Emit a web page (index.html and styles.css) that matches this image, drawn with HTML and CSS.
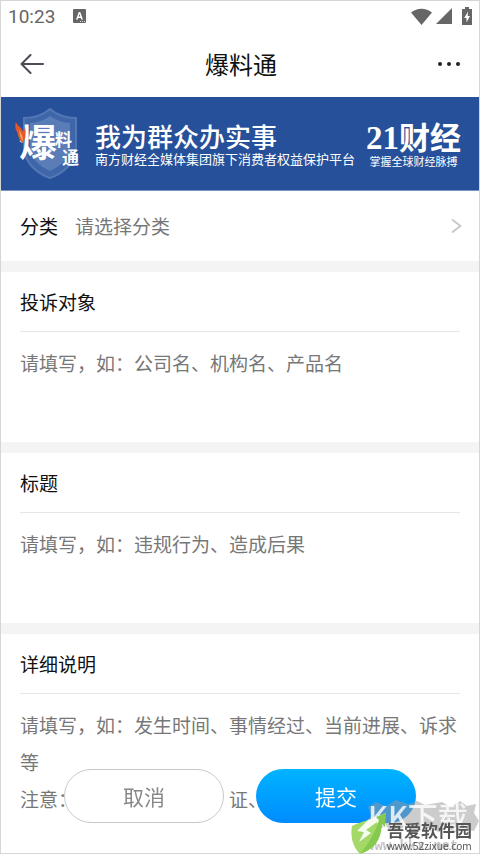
FILE: index.html
```html
<!DOCTYPE html>
<html lang="zh-CN">
<head>
    <meta charset="UTF-8">
    <meta name="viewport" content="width=device-width, initial-scale=1.0">
    <title>爆料通</title>
    <link rel="stylesheet" href="styles.css">
</head>
<body>
    <div class="page">
        <div class="status-bar">
            <span class="time">10:23</span>
            <svg class="status-app" width="13" height="14" viewBox="0 0 13 14">
                <rect width="13" height="14" rx="1" fill="#666"/>
                <path d="M3 10.500 5.800 3h1.400L10 10.500H8.300L7.800 9H5.200l-.5 1.500zM5.700 7.500h1.600L6.500 5z" fill="#fff"/>
                <path d="M7 12.500h5" stroke="#ddd" stroke-dasharray="1 1"/>
            </svg>
            <div class="status-icons">
                <svg width="21" height="17" viewBox="0 0 21 17"><path d="M0 4.500C6-.6 15-.6 21 4.500L10.500 17z" fill="#666"/></svg>
                <svg width="16" height="16" viewBox="0 0 16 16"><path d="M16 0v16H0z" fill="#666"/></svg>
                <svg class="battery" width="10" height="18" viewBox="0 0 10 18">
                    <path d="M3 0h4v2h3v16H0V2h3z" fill="#666"/>
                    <path d="M6 4.500 2.200 11H4.500v4.500L8 9H5.700z" fill="#fff"/>
                </svg>
            </div>
        </div>
        <header class="nav">
            <button class="nav-button" aria-label="返回">
                <svg width="24" height="20" viewBox="0 0 24 20" fill="none" stroke="#4b4b58" stroke-width="2" stroke-linecap="round" stroke-linejoin="round"><path d="M10.500 1 1.500 10l9 9M1.500 10H23"/></svg>
            </button>
            <h1>爆料通</h1>
            <button class="nav-button" aria-label="更多">
                <svg width="22" height="4" viewBox="0 0 22 4" fill="#222"><circle cx="2" cy="2" r="2"/><circle cx="11" cy="2" r="2"/><circle cx="20" cy="2" r="2"/></svg>
            </button>
        </header>

        <div class="banner">
            <svg class="banner-logo" width="68" height="72" viewBox="0 0 68 72">
                <path d="M35 1C42 7 50 10 61 10V39C61 54 49 65 35 70C21 65 9 54 9 39V10C20 10 28 7 35 1z" fill="#3e66a9" stroke="#5277b4" stroke-width="2"/>
                <path d="M35 8C41 12 48 15 55 15V39C55 50 46 58 35 63C24 58 15 50 15 39V15C22 15 29 12 35 8z" fill="#5a7db7"/>
                <text class="logo-big" x="4" y="48">爆</text>
                <text class="logo-small" x="40" y="38">料</text>
                <text class="logo-small" x="47" y="56">通</text>
                <path d="M1 14C3 19 6 18 8 24C9 22 10 21 10 18C11 24 11 31 8 35C3 32 4 27 1 22C0 19 0 17 1 14z" fill="#e4572c"/>
                <path d="M4 22C6 25 8 27 8 33C5 31 5 27 4 22z" fill="#f5a04c"/>
            </svg>
            <div class="banner-text">
                <strong>我为群众办实事</strong>
                <span>南方财经全媒体集团旗下消费者权益保护平台</span>
            </div>
            <div class="banner-brand">
                <strong><b>21</b>财经</strong>
                <span>掌握全球财经脉搏</span>
            </div>
        </div>

        <form>
            <div class="category">
                <label for="category">分类</label>
                <select id="category">
                    <option>请选择分类</option>
                </select>
                <svg width="11" height="16" viewBox="0 0 11 16" fill="none" stroke="#c8c8c8" stroke-width="2"><path d="M1 1.500 9.500 8 1 14.500"/></svg>
            </div>
            <div class="field">
                <label for="target">投诉对象</label>
                <textarea id="target" placeholder="请填写，如：公司名、机构名、产品名"></textarea>
            </div>
            <div class="field">
                <label for="subject">标题</label>
                <textarea id="subject" placeholder="请填写，如：违规行为、造成后果"></textarea>
            </div>
            <div class="field field-detail">
                <label for="detail">详细说明</label>
                <textarea id="detail" placeholder="请填写，如：发生时间、事情经过、当前进展、诉求等&#10;注意：请提供联系方式、证、"></textarea>
            </div>
            <div class="actions">
                <button type="button" class="cancel">取消</button>
                <button type="submit" class="submit">提交</button>
            </div>
        </form>
    </div>

    <div class="watermark">
        <svg class="watermark-back" width="116" height="54" viewBox="0 0 116 54">
            <path d="M4 7 12 2 22 6 32 0 44 4 53 1 61 5 78 2 87 7 96 1 103 6 112 4 110 13 115 21 110 31 99 29 91 32 81 27 75 32 64 28 53 32 43 26 31 31 20 27 8 31 2 22 7 15z" fill="#999" opacity=".5"/>
            <text class="mark-kk" x="4" y="28">KK下载</text>
            <text class="mark-url" x="2" y="50">www.kkx.net</text>
        </svg>
        <svg class="leaf" width="36" height="41" viewBox="0 0 36 41">
            <path d="M34 1C25 6 10 8 1 13C-1 24 2 34 9 41C21 37 28 30 29 17z" fill="#a5d967"/>
            <path d="M35 0 17 7 6 18 13 19 8 29 20 20 15 17 26 9 27 12z" fill="#fff" opacity=".9"/>
            <path d="M35 0 25 4 28 7C24 20 18 30 9 41C23 36 30 28 31 11L34 14z" fill="#86c94f"/>
        </svg>
        <div class="watermark-text">
            <strong>吾爱软件园</strong>
            <span>www.52zixue.com</span>
        </div>
    </div>
</body>
</html>
```
FILE: styles.css
```css
* {
    box-sizing: border-box;
}
body {
    margin: 0;
    font-family: "Noto Sans CJK SC", sans-serif;
    font-size: 19px;
    color: #111;
    background-color: #fff;
}
button, select, textarea {
    font-family: inherit;
    font-size: inherit;
    border: none;
    background: none;
    padding: 0;
}
.page {
    height: 100vh;
    border: 1px solid #d6d6d6;
    overflow: hidden;
}

/* status bar and title */
.status-bar {
    display: flex;
    align-items: center;
    height: 30px;
    padding: 0 7px;
    font-family: Roboto, sans-serif;
    color: #666;
}
.status-app {
    margin-left: 18px;
}
.status-icons {
    display: flex;
    align-items: center;
    gap: 4px;
    margin-left: auto;
}
.battery {
    margin-left: 6px;
}
.nav {
    display: flex;
    align-items: center;
    justify-content: space-between;
    height: 66px;
    padding: 0 19px;
}
.nav h1 {
    margin: 0;
    font-size: 24px;
    font-weight: 400;
    line-height: 36px;
}
.nav-button {
    display: flex;
    align-items: center;
    height: 44px;
}

/* banner */
.banner {
    display: flex;
    align-items: center;
    height: 94px;
    padding: 0 18px 0 14px;
    background-color: #265099;
    border-bottom: 1px solid #7893c2;
    color: #fff;
}
.banner-logo {
    flex: none;
    overflow: visible;
}
.logo-big {
    font-size: 38px;
    font-weight: 700;
    fill: #fff;
}
.logo-small {
    font-size: 17px;
    font-weight: 700;
    fill: #fff;
}
.banner-text, .banner-brand {
    display: flex;
    flex-direction: column;
    white-space: nowrap;
}
.banner-text {
    margin-left: 12px;
}
.banner-text strong {
    font-size: 26px;
    font-weight: 500;
    line-height: 30px;
}
.banner-text span {
    font-size: 13px;
    line-height: 16px;
}
.banner-brand {
    align-items: center;
    margin-left: auto;
}
.banner-brand strong {
    font-size: 31px;
    line-height: 32px;
}
.banner-brand b {
    font-family: "Liberation Serif", serif;
    font-size: 33px;
}
.banner-brand span {
    font-size: 11px;
    line-height: 14px;
}

/* form */
.category {
    display: flex;
    align-items: center;
    height: 70px;
    padding: 0 17px 0 19px;
}
.category label, .category select {
    line-height: 28px;
}
.category select {
    flex: 1;
    margin-left: 17px;
    appearance: none;
    color: #777;
}
.field {
    border-top: 11px solid #f4f4f4;
    padding: 0 19px;
}
.field label {
    display: flex;
    align-items: center;
    height: 60px;
    border-bottom: 1px solid #e6e6e6;
}
.field textarea {
    display: block;
    width: 100%;
    height: 110px;
    padding-top: 12px;
    line-height: 37px;
    resize: none;
    outline: none;
    overflow: hidden;
}
.field-detail textarea {
    height: 160px;
}
textarea::placeholder {
    color: #777;
}

.actions {
    position: fixed;
    left: 0;
    right: 0;
    bottom: 31px;
    display: flex;
    justify-content: center;
    gap: 32px;
}
.actions button {
    width: 160px;
    height: 54px;
    border-radius: 27px;
    font-size: 21px;
}
.actions .cancel {
    background-color: #fff;
    border: 1px solid #c8c8c8;
    color: #888;
}
.actions .submit {
    background: linear-gradient(#00b4ff, #008cff);
    color: #fff;
}

/* watermark over the bottom corner */
.watermark {
    position: fixed;
    right: 8px;
    bottom: 0;
    display: flex;
    align-items: flex-end;
    pointer-events: none;
}
.watermark-back {
    position: absolute;
    right: -8px;
    bottom: 0;
}
.mark-kk {
    font-size: 30px;
    font-weight: 500;
    fill: #fff;
    opacity: .8;
}
.mark-url {
    font-family: "Liberation Mono", monospace;
    font-size: 14px;
    font-weight: 700;
    fill: #c4c4c4;
}
.leaf {
    position: relative;
}
.watermark-text {
    position: relative;
    display: flex;
    flex-direction: column;
    color: #555;
    white-space: nowrap;
    padding-bottom: 1px;
}
.watermark-text strong {
    font-size: 17px;
    line-height: 18px;
}
.watermark-text span {
    font-family: "Noto Sans", sans-serif;
    font-size: 10px;
    line-height: 14px;
}
```
